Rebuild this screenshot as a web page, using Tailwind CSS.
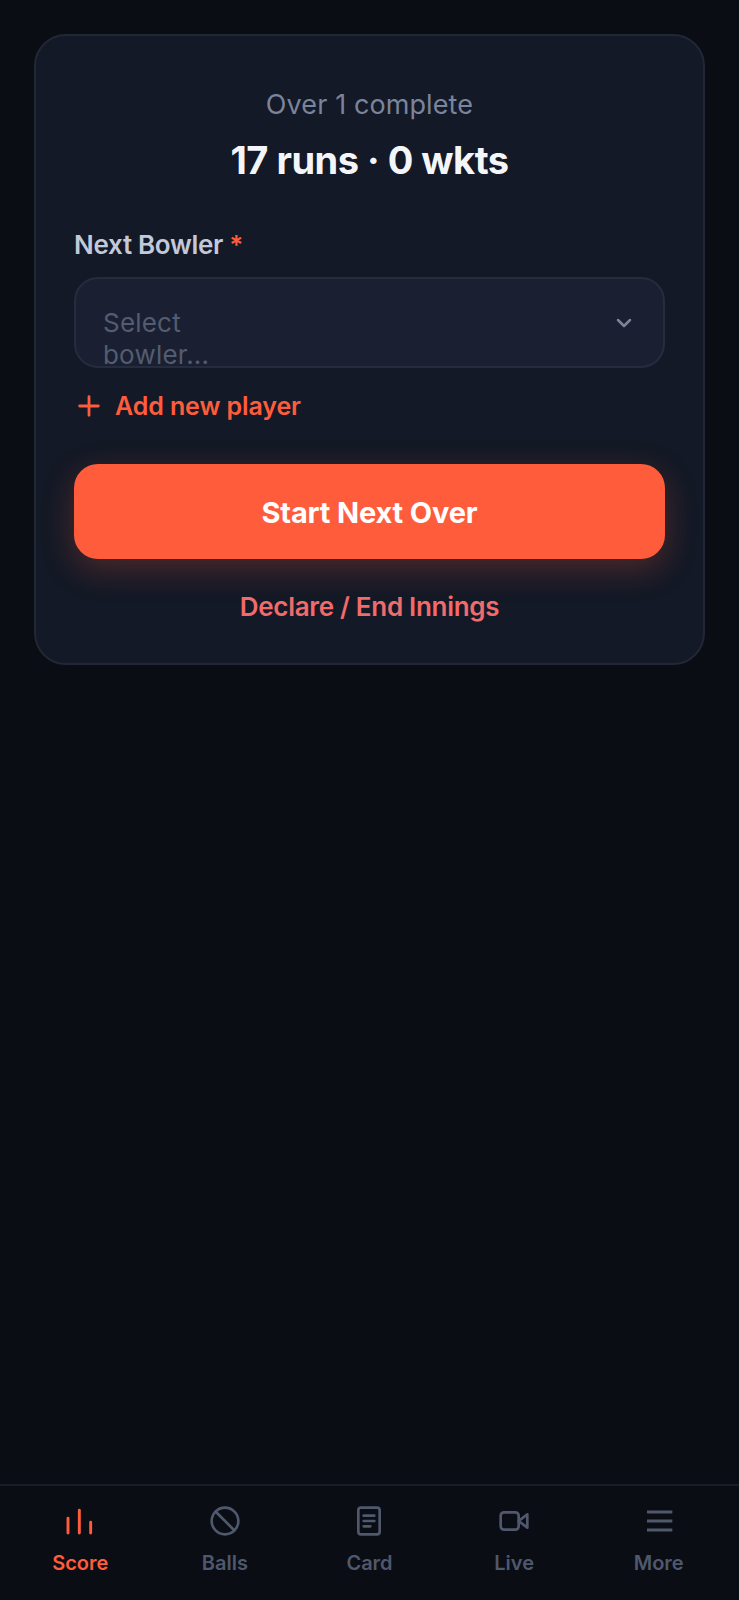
<!DOCTYPE html>
<html lang="en">
  <head>
    <meta charset="UTF-8" />
    <meta name="viewport" content="width=device-width, initial-scale=1.0" />
    <title>Scorer</title>
    <script src="https://cdn.jsdelivr.net/npm/@tailwindcss/browser@4"></script>
  </head>

  <body class="bg-[#0a0d14] font-['Inter',sans-serif]">
    <div class="h-[1600px] flex flex-col">
      <main class="flex-1 px-[34px] pt-[34px]">
        <!-- Over complete card -->
        <div class="h-[631px] rounded-[32px] border-2 border-[#212735] bg-[#131926] px-[38px] pt-[53px]">
          <p class="text-center text-[27px] leading-[32px] tracking-[0.1px] text-[#7a849b]">Over 1 complete</p>
          <p class="mt-[15px] text-center text-[38px] leading-[48px] font-bold tracking-[-0.5px] text-[#f3f5f9]">17 runs · 0 wkts</p>

          <p class="mt-[45px] text-[26px] leading-[32px] font-semibold tracking-[-0.3px] text-[#c3c9da]">Next Bowler <span class="text-[#ff5c3c]">*</span></p>

          <div class="mt-[16px] h-[91px] rounded-[24px] border-2 border-[#252c3e] bg-[#1a2032] pl-[27px] pr-[27px] flex justify-between overflow-hidden">
            <div class="w-[130px] pt-[28px] text-[26px] leading-[32px] tracking-[0.2px] text-[#535c70]">Select bowler...</div>
            <svg class="mt-[32px] w-[24px] h-[24px] text-[#7a849b]" viewBox="0 0 24 24" fill="none" stroke="currentColor" stroke-width="2.5" stroke-linecap="round" stroke-linejoin="round"><path d="m6 9 6 6 6-6" /></svg>
          </div>

          <div class="mt-[22px] flex items-center gap-[12px] pl-[1px] text-[#ff5c3c]">
            <svg class="w-[28px] h-[28px]" viewBox="0 0 24 24" fill="none" stroke="currentColor" stroke-width="2.4" stroke-linecap="round"><path d="M4 12h16M12 4v16" /></svg>
            <span class="text-[25px] leading-[32px] font-semibold tracking-[-0.1px]">Add new player</span>
          </div>

          <button class="mt-[42px] h-[95px] w-full rounded-[24px] bg-[#ff5c3c] pt-[2px] text-[29px] font-bold tracking-[-0.15px] text-white shadow-[0_10px_32px_rgba(255,92,60,0.25)]">Start Next Over</button>

          <p class="mt-[32px] text-center text-[26px] leading-[32px] font-semibold tracking-[-0.3px] text-[#f26a6a]">Declare / End Innings</p>
        </div>
      </main>

      <!-- Bottom nav -->
      <nav class="h-[116px] border-t-2 border-[#171c27] px-[8px] pt-[19px] grid grid-cols-5 text-[#4f586c]">
        <a class="flex flex-col items-center text-[#ff5c3c]">
          <svg class="w-[32px] h-[32px]" viewBox="0 0 24 24" fill="none" stroke="currentColor" stroke-width="2.2" stroke-linecap="round"><path d="M3 21V10M11.5 21V4M20 21v-8" /></svg>
          <span class="mt-[11px] text-[20px] leading-[30px] font-semibold">Score</span>
        </a>
        <a class="flex flex-col items-center">
          <svg class="w-[32px] h-[32px]" viewBox="0 0 24 24" fill="none" stroke="currentColor" stroke-width="2" stroke-linecap="round"><circle cx="12" cy="12" r="10" /><path d="m4.9 4.9 14.2 14.2" /></svg>
          <span class="mt-[11px] text-[20px] leading-[30px] font-semibold">Balls</span>
        </a>
        <a class="flex flex-col items-center">
          <svg class="w-[32px] h-[32px]" viewBox="0 0 24 24" fill="none" stroke="currentColor" stroke-width="2" stroke-linecap="round" stroke-linejoin="round"><rect x="4" y="2" width="16" height="20" rx="2" /><path d="M8 8h8M8 12h8M8 16h5" /></svg>
          <span class="mt-[11px] text-[20px] leading-[30px] font-semibold">Card</span>
        </a>
        <a class="flex flex-col items-center">
          <svg class="w-[32px] h-[32px]" viewBox="0 0 24 24" fill="none" stroke="currentColor" stroke-width="2" stroke-linecap="round" stroke-linejoin="round"><rect x="2" y="5.5" width="13.5" height="13" rx="2.5" /><path d="m22 7-6.5 5 6.5 5V7Z" /></svg>
          <span class="mt-[11px] text-[20px] leading-[30px] font-semibold">Live</span>
        </a>
        <a class="flex flex-col items-center">
          <svg class="w-[32px] h-[32px]" viewBox="0 0 24 24" fill="none" stroke="currentColor" stroke-width="2.2"><path d="M3 5.25h19M3 12h19M3 18.75h19" /></svg>
          <span class="mt-[11px] text-[20px] leading-[30px] font-semibold">More</span>
        </a>
      </nav>
    </div>
  </body>
</html>
